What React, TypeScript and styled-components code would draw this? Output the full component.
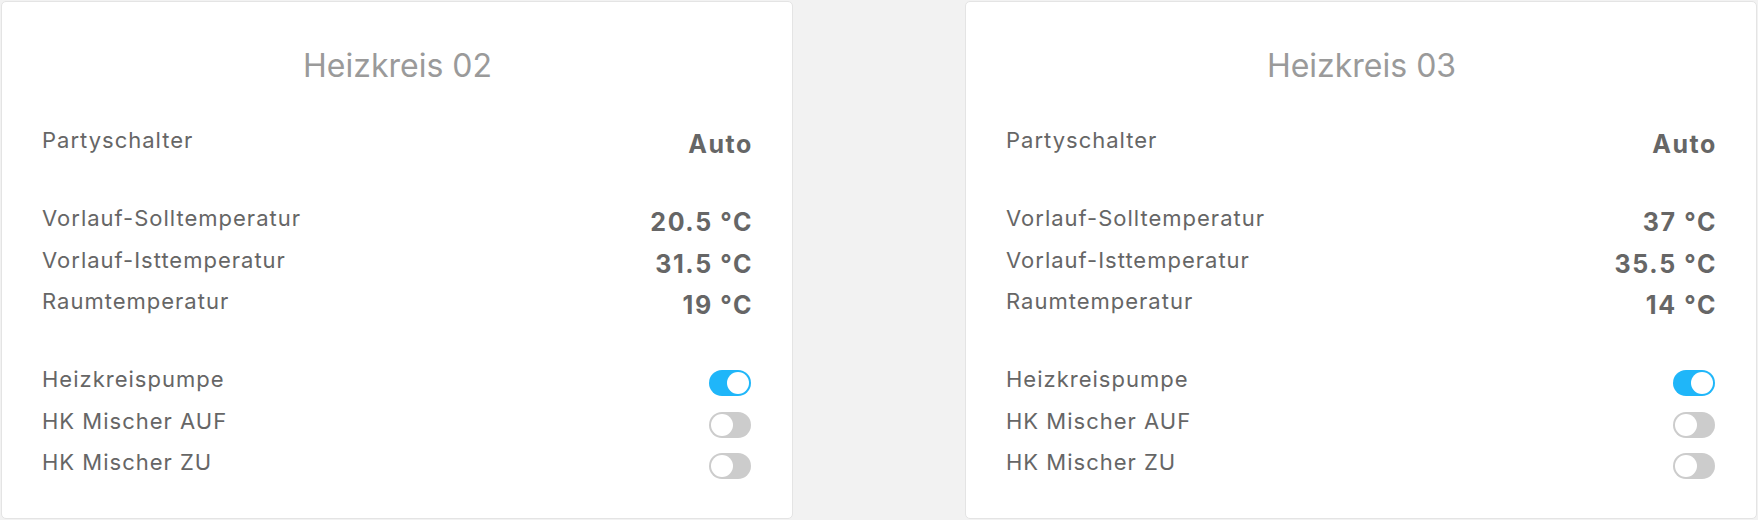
import React from "react";
import styled, { createGlobalStyle } from "styled-components";

const GlobalStyle = createGlobalStyle`
  html, body {
    margin: 0;
    padding: 0;
    background: #f2f2f2;
    font-family: Inter, "Liberation Sans", sans-serif;
  }
`;

const Page = styled.div`
  display: flex;
  gap: 172px;
  padding: 1px;
`;

const Card = styled.div`
  box-sizing: border-box;
  width: 792px;
  height: 518px;
  background: #fff;
  border: 1px solid #e4e4e4;
  border-radius: 5px;
  padding: 44px 39px 0 40px;
`;

const Title = styled.div`
  text-align: center;
  font-size: 32px;
  line-height: 40px;
  font-weight: 400;
  color: #9a9a9a;
  margin-bottom: 33px;
`;

const Group = styled.div`
  display: flex;
  flex-direction: column;
  & + & {
    margin-top: 36.5px;
  }
`;

const Row = styled.div`
  display: flex;
  justify-content: space-between;
  align-items: flex-start;
  height: 41.5px;
`;

const Label = styled.span`
  font-size: 22px;
  line-height: 42px;
  color: #666;
  letter-spacing: 1px;
`;

const Value = styled.span`
  font-size: 25px;
  line-height: 42px;
  font-weight: 700;
  color: #666;
  padding-top: 4px;
  letter-spacing: 1.6px;
`;

const Toggle = styled.span<{ $on: boolean }>`
  box-sizing: border-box;
  width: 42px;
  height: 26px;
  margin: 12px 2px 0 0;
  border-radius: 13px;
  background: ${(p) => (p.$on ? "#1fb6f9" : "#cccccc")};
  display: flex;
  align-items: center;
  justify-content: ${(p) => (p.$on ? "flex-end" : "flex-start")};
  padding: 0 2px;
`;

const Knob = styled.span`
  width: 22px;
  height: 22px;
  border-radius: 50%;
  background: #fff;
`;

type Item = { label: string; value?: string; on?: boolean };

const circuits: { name: string; groups: Item[][] }[] = [
  {
    name: "Heizkreis 02",
    groups: [
      [{ label: "Partyschalter", value: "Auto" }],
      [
        { label: "Vorlauf-Solltemperatur", value: "20.5 °C" },
        { label: "Vorlauf-Isttemperatur", value: "31.5 °C" },
        { label: "Raumtemperatur", value: "19 °C" },
      ],
      [
        { label: "Heizkreispumpe", on: true },
        { label: "HK Mischer AUF", on: false },
        { label: "HK Mischer ZU", on: false },
      ],
    ],
  },
  {
    name: "Heizkreis 03",
    groups: [
      [{ label: "Partyschalter", value: "Auto" }],
      [
        { label: "Vorlauf-Solltemperatur", value: "37 °C" },
        { label: "Vorlauf-Isttemperatur", value: "35.5 °C" },
        { label: "Raumtemperatur", value: "14 °C" },
      ],
      [
        { label: "Heizkreispumpe", on: true },
        { label: "HK Mischer AUF", on: false },
        { label: "HK Mischer ZU", on: false },
      ],
    ],
  },
];

export default function App() {
  return (
    <>
      <GlobalStyle />
      <Page>
        {circuits.map((c) => (
          <Card key={c.name}>
            <Title>{c.name}</Title>
            {c.groups.map((g, gi) => (
              <Group key={gi}>
                {g.map((item) => (
                  <Row key={item.label}>
                    <Label>{item.label}</Label>
                    {item.value !== undefined ? (
                      <Value>{item.value}</Value>
                    ) : (
                      <Toggle $on={!!item.on}>
                        <Knob />
                      </Toggle>
                    )}
                  </Row>
                ))}
              </Group>
            ))}
          </Card>
        ))}
      </Page>
    </>
  );
}
